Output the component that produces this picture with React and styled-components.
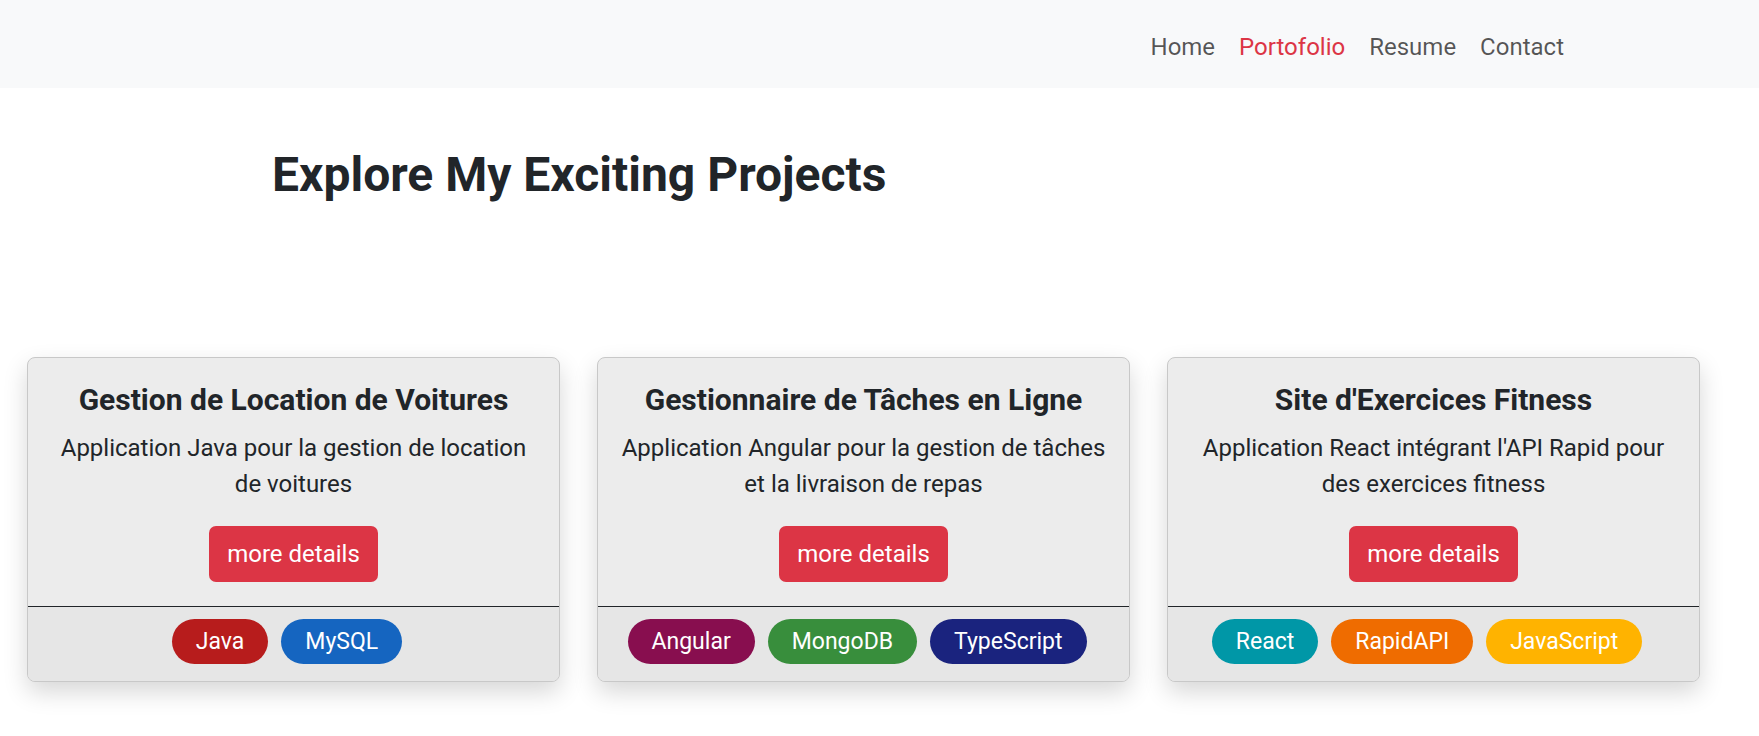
import React from "react";
import styled, { createGlobalStyle } from "styled-components";

const GlobalStyle = createGlobalStyle`
  * {
    box-sizing: border-box;
  }
  body {
    margin: 0;
    background: #ffffff;
    font-family: Roboto, "Liberation Sans", Arial, sans-serif;
    color: #212529;
  }
`;

const NavBar = styled.nav`
  height: 88px;
  background-color: #f8f9fa;
  display: flex;
  align-items: center;
  justify-content: flex-end;
  padding-right: 183px;
`;

const NavLink = styled.a`
  font-size: 24px;
  line-height: 36px;
  padding: 0 12px;
  margin-top: 5px;
  text-decoration: none;
  cursor: pointer;
  color: ${({ active }) => (active ? "#dc3545" : "rgba(0, 0, 0, 0.66)")};
`;

const Header = styled.section`
  padding: 58px 0 0 272px;
`;

const PageTitle = styled.h1`
  margin: 0;
  font-size: 48px;
  line-height: 57.6px;
  font-weight: 700;
  color: #212529;
`;

const CardRow = styled.div`
  display: flex;
  gap: 37px;
  padding-left: 27px;
  margin-top: 153px;
  padding-bottom: 55px;
`;

const Card = styled.div`
  width: 533px;
  background-color: #ececec;
  border: 1px solid #c8c8c8;
  border-radius: 8px;
  overflow: hidden;
  box-shadow: 0 10px 24px rgba(0, 0, 0, 0.16);
  display: flex;
  flex-direction: column;
`;

const CardBody = styled.div`
  padding: 24px 22px;
  text-align: center;
`;

const CardTitle = styled.h5`
  margin: 0 0 12px;
  font-size: 30px;
  line-height: 36px;
  font-weight: 700;
  color: #212529;
`;

const CardText = styled.p`
  margin: 0 0 24px;
  font-size: 24px;
  line-height: 36px;
  color: #212529;
`;

const DetailsButton = styled.button`
  font-family: inherit;
  font-size: 24px;
  line-height: 36px;
  padding: 10px 18px;
  border: none;
  border-radius: 7px;
  background-color: #dc3545;
  color: #ffffff;
  cursor: pointer;
`;

const CardFooter = styled.div`
  border-top: 1px solid #212529;
  background-color: #e6e6e6;
  padding: 12px 0 17px;
  display: flex;
  justify-content: center;
`;

const Badge = styled.span`
  display: inline-block;
  font-size: 23px;
  line-height: 29px;
  padding: 8px 24px;
  margin-right: 13px;
  border-radius: 23px;
  color: #ffffff;
  background-color: ${({ color }) => color};
`;

const projects = [
  {
    title: "Gestion de Location de Voitures",
    text: "Application Java pour la gestion de location de voitures",
    tags: [
      ["Java", "#b71c1c"],
      ["MySQL", "#1565c0"],
    ],
  },
  {
    title: "Gestionnaire de Tâches en Ligne",
    text: "Application Angular pour la gestion de tâches et la livraison de repas",
    tags: [
      ["Angular", "#880e4f"],
      ["MongoDB", "#388e3c"],
      ["TypeScript", "#1a237e"],
    ],
  },
  {
    title: "Site d'Exercices Fitness",
    text: "Application React intégrant l'API Rapid pour des exercices fitness",
    tags: [
      ["React", "#0097a7"],
      ["RapidAPI", "#ef6c00"],
      ["JavaScript", "#ffb300"],
    ],
  },
];

export default function App() {
  return (
    <>
      <GlobalStyle />
      <NavBar>
        <NavLink>Home</NavLink>
        <NavLink active>Portofolio</NavLink>
        <NavLink>Resume</NavLink>
        <NavLink>Contact</NavLink>
      </NavBar>
      <Header>
        <PageTitle>Explore My Exciting Projects</PageTitle>
      </Header>
      <CardRow>
        {projects.map((p) => (
          <Card key={p.title}>
            <CardBody>
              <CardTitle>{p.title}</CardTitle>
              <CardText>{p.text}</CardText>
              <DetailsButton>more details</DetailsButton>
            </CardBody>
            <CardFooter>
              {p.tags.map(([name, color]) => (
                <Badge key={name} color={color}>
                  {name}
                </Badge>
              ))}
            </CardFooter>
          </Card>
        ))}
      </CardRow>
    </>
  );
}
